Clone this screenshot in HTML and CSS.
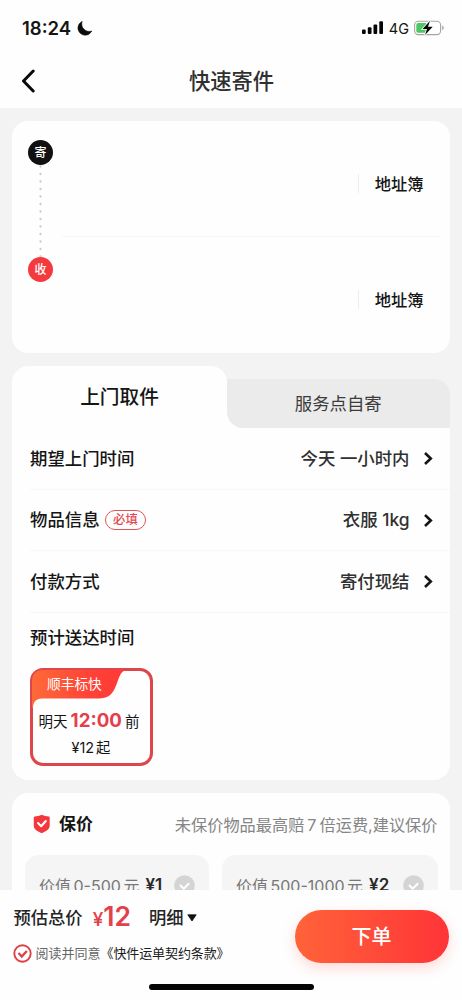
FILE: index.html
```html
<!DOCTYPE html>
<html lang="zh-CN">
<head>
<meta charset="utf-8">
<meta name="viewport" content="width=device-width, initial-scale=1">
<title>快速寄件</title>
<link rel="stylesheet" href="styles.css">
</head>
<body>
<div class="app">
  <header class="header">
    <div class="status">
      <div class="status-left">
        <span class="clock">18:24</span>
        <svg class="moon" width="15" height="15" viewBox="0 0 15 15"><path d="M5.200.4A7.200 7.200 0 1 0 14.700 10C11.500 11.200 8.500 10 6.500 7.800C4.800 5.900 4.300 3 5.200.4Z" fill="#0b0b0b" stroke="#0b0b0b" stroke-width=".6"/></svg>
      </div>
      <div class="status-right">
        <svg width="22" height="14" viewBox="0 0 22 14" fill="#050505"><rect x="0" y="8.500" width="3.700" height="4.500" rx="1"/><rect x="5.800" y="6.200" width="3.700" height="6.800" rx="1"/><rect x="11.500" y="3.400" width="3.700" height="9.600" rx="1"/><rect x="17.300" y="0.200" width="3.700" height="12.800" rx="1"/></svg>
        <span class="network">4G</span>
        <svg width="31" height="16" viewBox="0 0 31 16"><rect x=".6" y="1.200" width="26" height="13.400" rx="3.800" fill="#fff" stroke="#a5a5a5" stroke-width="1.100"/><path d="M4 3h8v9.800H4A1.800 1.800 0 0 1 2.300 11V4.800A1.800 1.800 0 0 1 4 3Z" fill="#4cc764"/><path d="M28.200 5.600c2 .6 2 4.100 0 4.700Z" fill="#a5a5a5"/><path d="M16 .8 8.600 8.900h4.400L11 15l7.700-8.300h-4.700Z" fill="#050505" stroke="#fff" stroke-width="1.600" paint-order="stroke"/></svg>
      </div>
    </div>
    <div class="nav">
      <svg class="back" width="16" height="24" viewBox="0 0 16 24"><path d="M13.200 2 3.500 12l9.700 10" fill="none" stroke="#0a0a0a" stroke-width="3" stroke-linecap="round" stroke-linejoin="round"/></svg>
      <h1 class="title">快速寄件</h1>
    </div>
  </header>

  <main class="content">
    <section class="card route">
      <div class="route-track">
        <span class="stop">寄</span>
        <svg class="dots" width="4" height="92" viewBox="0 0 4 92"><path d="M1.500 1.500V92" stroke="#cbcbcb" stroke-width="2.300" stroke-linecap="round" stroke-dasharray="0 7.500"/></svg>
        <span class="stop stop-to">收</span>
      </div>
      <div class="route-list">
        <div class="address"><span class="book">地址簿</span></div>
        <div class="address"><span class="book">地址簿</span></div>
      </div>
    </section>

    <section class="pickup">
      <div class="tabs">
        <div class="tab tab-active">上门取件</div>
        <div class="tab-side"><div class="tab tab-idle">服务点自寄</div></div>
      </div>
      <div class="pickup-body">
        <div class="row"><span>期望上门时间</span><span class="value">今天 一小时内</span><svg class="arrow" width="10" height="15" viewBox="0 0 10 15"><path d="M2 2l5.800 5.500L2 13"/></svg></div>
        <div class="row"><span>物品信息</span><span class="tag">必填</span><span class="value">衣服 1kg</span><svg class="arrow" width="10" height="15" viewBox="0 0 10 15"><path d="M2 2l5.800 5.500L2 13"/></svg></div>
        <div class="row"><span>付款方式</span><span class="value">寄付现结</span><svg class="arrow" width="10" height="15" viewBox="0 0 10 15"><path d="M2 2l5.800 5.500L2 13"/></svg></div>
        <div class="eta-title">预计送达时间</div>
        <div class="express">
          <svg class="ribbon" width="94" height="38" viewBox="0 0 94 38"><defs><linearGradient id="ribbon-fill" x1="0" y1="0" x2="1" y2="0"><stop offset="0" stop-color="#ff6a38"/><stop offset=".6" stop-color="#ff4337"/><stop offset="1" stop-color="#ff3838"/></linearGradient></defs><path d="M0 38V10A10 10 0 0 1 10 0H94C87 2 87 10 83 18C80 25 75 28.500 67 28.500H10C4 28.500 1 32 1 38Z" fill="url(#ribbon-fill)"/></svg>
          <div class="express-name">顺丰标快</div>
          <div class="express-time">明天<b>12:00</b>前</div>
          <div class="express-price">¥12<span>起</span></div>
        </div>
      </div>
    </section>

    <section class="card insure">
      <div class="insure-head">
        <svg width="18" height="20" viewBox="0 0 18 20"><path d="M8.700.8c2.500 1.200 5 1.500 7.200 1.700.5 0 .8.400.8.900v8.100c0 4-4 5.900-8 7.800C4.700 17.400.8 15.500.8 11.500V3.400c0-.5.300-.9.800-.9C4 2.300 6.200 2 8.700.8Z" fill="#f3373c"/><path d="m5 9 3.200 3.200L12.800 7" fill="none" stroke="#fff" stroke-width="2.100" stroke-linecap="round" stroke-linejoin="round"/></svg>
        <span class="insure-title">保价</span>
        <span class="insure-tip">未保价物品最高赔<i>7</i>倍运费,建议保价</span>
      </div>
      <div class="plans">
        <div class="plan"><span>价值<i>0-500</i>元</span><b>¥1</b><svg class="check" width="21" height="21" viewBox="0 0 21 21"><circle cx="10.500" cy="10.500" r="10.300" fill="#d4d4d4"/><path d="m6 10 3.700 3.700 5.500-5.500" fill="none" stroke="#fff" stroke-width="2"/></svg></div>
        <div class="plan plan-wide"><span>价值<i>500-1000</i>元</span><b>¥2</b><svg class="check" width="21" height="21" viewBox="0 0 21 21"><circle cx="10.500" cy="10.500" r="10.300" fill="#d4d4d4"/><path d="m6 10 3.700 3.700 5.500-5.500" fill="none" stroke="#fff" stroke-width="2"/></svg></div>
      </div>
    </section>
  </main>

  <footer class="footer">
    <div class="order">
      <div class="order-info">
        <div class="total"><span>预估总价</span><span class="amount"><small>¥</small>12</span><span class="detail">明细</span><svg width="10" height="8" viewBox="0 0 10 8"><path d="M.8.8h8.400L5 7Z" fill="#111" stroke="#111" stroke-width=".8" stroke-linejoin="round"/></svg></div>
        <div class="terms"><svg width="19" height="19" viewBox="0 0 19 19" fill="none" stroke="#df3f45"><circle cx="9.500" cy="9.500" r="8.200" stroke-width="1.900"/><path d="m5.500 9 3.300 3.600 5-5.600" stroke-width="2.300"/></svg><span class="agree">阅读并同意</span><span class="contract">《快件运单契约条款》</span></div>
      </div>
      <button class="submit">下单</button>
    </div>
    <div class="home-bar"></div>
  </footer>
</div>
</body>
</html>
```

FILE: styles.css
```css
* { box-sizing: border-box; }

body {
  margin: 0;
  background: #f3f3f3;
  color: #151515;
  font-family: Inter, "Noto Sans CJK SC", sans-serif;
  font-weight: 500;
}

i { font-style: normal; }
svg { display: block; flex: none; }

.app {
  display: flex;
  flex-direction: column;
  width: 462px;
  height: 1000px;
  overflow: hidden;
  white-space: nowrap;
}

/* Header */
.header { flex: none; height: 108px; background: #fefefe; }

.status {
  display: flex;
  justify-content: space-between;
  align-items: center;
  height: 56px;
  padding: 0 17px 0 22px;
}
.status-left, .status-right { display: flex; align-items: center; }
.status-left { gap: 6px; }
.clock { font-size: 18.500px; font-weight: 600; line-height: 24px; letter-spacing: 0; }
.network { margin: 1px 5px 0 5px; font-size: 14.500px; font-weight: 400; line-height: 20px; }

.nav { display: flex; align-items: center; height: 50px; padding: 0 20px; }
.title {
  flex: 1;
  margin: 0 15px 0 0;
  text-align: center;
  color: #303030;
  font-size: 21.300px;
  font-weight: 500;
  line-height: 30px;
}

.content {
  flex: 1;
  min-height: 0;
  overflow: hidden;
  display: flex;
  flex-direction: column;
  gap: 13px;
  padding: 13px 12.500px 0 12px;
}
.card { flex: none; background: #fefefe; border-radius: 16px; }

.route { display: flex; height: 232px; padding: 0 9px 0 15px; }
.route-track {
  display: flex;
  flex-direction: column;
  align-items: center;
  width: 27px;
  padding-top: 19px;
}
.stop {
  width: 25px;
  height: 25px;
  border-radius: 50%;
  background: #111;
  color: #fff;
  font-size: 12px;
  line-height: 26px;
  text-align: center;
}
.stop-to { background: #f43a3f; }
.route-list { flex: 1; margin-left: 8px; }
.address {
  display: flex;
  justify-content: flex-end;
  align-items: center;
  height: 116px;
  padding: 9px 17px 0 0;
}
.address:first-child { border-bottom: 1px solid #f7f7f7; }
.book {
  height: 19px;
  padding-left: 16px;
  border-left: 1.500px solid #eee;
  font-size: 16.300px;
  font-weight: 500;
  line-height: 21px;
}

/* Pickup */
.pickup { flex: none; height: 414px; border-radius: 16px; overflow: hidden; }
.tabs { display: flex; height: 62px; background: linear-gradient(#fefefe, #fefefe) bottom / 100% 20px no-repeat; }
.tab { text-align: center; }
.tab-active {
  width: 215px;
  background: #fefefe;
  border-radius: 16px 16px 0 0;
  font-size: 19.700px;
  line-height: 63px;
}
.tab-side { flex: 1; padding-top: 12.500px; }
.tab-idle {
  height: 49.500px;
  background: #ebebeb;
  border-radius: 0 16px 0 16px;
  color: #3c3c3c;
  font-size: 17.400px;
  font-weight: 400;
  line-height: 49px;
}
.pickup-body { height: 353px; padding: 0 0 0 18px; background: #fefefe; }
.row {
  display: flex;
  align-items: center;
  height: 61.500px;
  padding: 1px 17px 0 0;
  border-bottom: 1px solid #f7f7f7;
  font-size: 17.400px;
  line-height: 26px;
}
.value { margin-left: auto; color: #303030; }
.arrow { margin-left: 13px; fill: none; stroke: #151515; stroke-width: 2.600; stroke-linecap: butt; }
.tag {
  height: 20px;
  margin-left: 5px;
  padding: 0 7.500px;
  border: 1px solid #dd5559;
  border-radius: 10px;
  color: #df4b50;
  font-size: 12.300px;
  line-height: 18px;
}
.eta-title { padding-top: 11px; font-size: 17.400px; line-height: 28px; }
.express {
  position: relative;
  width: 123px;
  height: 98px;
  margin-top: 16px;
  border: 3px solid #dd464a;
  border-radius: 13px;
  text-align: center;
}
.ribbon { position: absolute; left: -1px; top: -1px; }
.express-name { position: relative; padding-left: 14px; text-align: left; color: #fff; font-size: 13.700px; font-weight: 400; line-height: 27px; }
.express-time { padding: 10px 5px 0 0; font-size: 14.500px; font-weight: 400; line-height: 26px; }
.express-time b { margin: 0 3px; color: #e4404a; font-size: 18.700px; font-weight: 700; }
.express-price { padding-right: 1px; font-size: 14.400px; font-weight: 400; line-height: 25px; }
.express-price span { margin-left: 2px; }

/* Insurance */
.insure { height: 160px; padding: 17px 12px 0 13px; }
.insure-head { display: flex; align-items: center; height: 28px; padding-left: 8px; }
.insure-title { margin-left: 8px; font-size: 17px; font-weight: 700; line-height: 28px; }
.insure-tip { margin-left: auto; padding-top: 1px; color: #858585; font-size: 16.200px; font-weight: 400; line-height: 28px; }
.insure-tip i { margin: 0 3px; }
.plans { display: flex; gap: 13px; margin-top: 17px; }
.plan {
  display: flex;
  align-items: center;
  width: 184px;
  height: 61px;
  padding: 0 14px;
  background: #f5f5f5;
  border-radius: 14px;
  color: #777;
  font-size: 16px;
  font-weight: 400;
}
.plan span, .plan b { padding-bottom: 1px; }
.plan-wide { flex: 1; }
.plan i { margin: 0 2.500px; }
.plan b { margin-left: 6px; color: #292929; font-size: 17px; font-weight: 600; }
.check { margin-left: auto; }

/* Order bar */
.footer { flex: none; height: 110px; background: #fefefe; }
.order { display: flex; justify-content: space-between; height: 94px; padding: 0 13.500px; }
.order-info { padding-top: 12px; }
.total { display: flex; align-items: center; height: 32px; color: #242424; font-size: 17.300px; line-height: 32px; }
.amount { margin-left: 10px; color: #e3404a; font-size: 26.500px; font-weight: 600; }
.amount small { font-size: 19px; font-weight: 500; }
.detail { margin: 0 3px 0 18px; }
.terms { display: flex; align-items: center; height: 38px; margin-left: -1px; font-size: 13px; font-weight: 400; line-height: 20px; }
.agree { margin-left: 4px; color: #666; }
.contract { color: #202020; letter-spacing: -.1px; }
.submit {
  width: 154px;
  height: 53px;
  margin-top: 20px;
  padding: 0;
  border: 0;
  border-radius: 27px;
  background: linear-gradient(90deg, #ff6339, #ff3438);
  box-shadow: 0 5px 14px rgba(255, 76, 56, .2);
  color: #fff;
  font: 500 20px/55px Inter, "Noto Sans CJK SC", sans-serif;
}
.home-bar { width: 165px; height: 6px; margin: 0 auto; border-radius: 3px; background: #050505; }
```
